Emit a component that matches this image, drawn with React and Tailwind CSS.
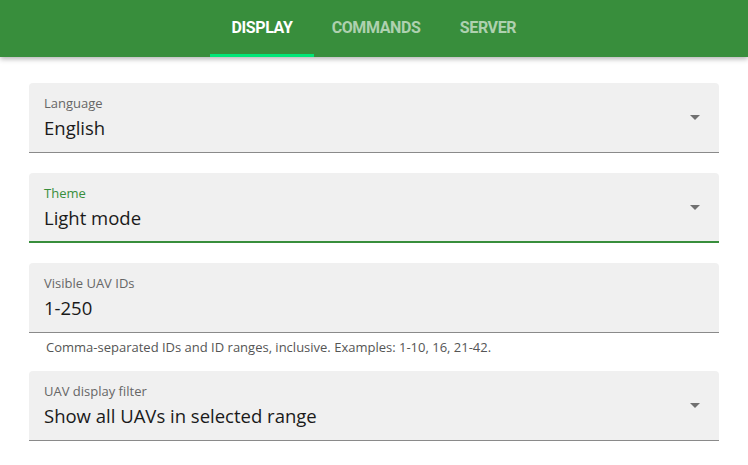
import React from "react";

function Arrow() {
  return (
    <svg width="10" height="5" viewBox="0 0 10 5" className="absolute right-[19px] top-[32px]">
      <path d="M0 0L5 5L10 0Z" fill="#707070" />
    </svg>
  );
}

function Field({ label, value, select, focused }) {
  return (
    <div
      className={`relative h-[70px] rounded-t-[4px] bg-[#f0f0f0] px-[15px] pt-[12px] ${
        focused ? "border-b-2 border-[#388e3c]" : "border-b border-[#8a8a8a]"
      }`}
    >
      <div className={`text-[13px] leading-[16px] ${focused ? "text-[#388e3c]" : "text-[#666]"}`}>{label}</div>
      <div className="mt-[5px] text-[18.5px] leading-[24px] text-[#1a1a1a]">{value}</div>
      {select && <Arrow />}
    </div>
  );
}

export default function App() {
  return (
    <div className="h-[465px] w-[748px] bg-white" style={{ fontFamily: "'Open Sans', Roboto, sans-serif" }}>
      <div
        className="relative flex h-[57px] justify-center bg-[#388e3c] shadow-[0_2px_5px_rgba(0,0,0,0.3)]"
        style={{ fontFamily: "Roboto, sans-serif" }}
      >
        <div className="flex">
          <div className="relative flex w-[104px] items-center justify-center pb-[2px] text-[16px] font-bold tracking-tight text-white">
            DISPLAY
            <div className="absolute bottom-0 left-0 h-[3px] w-full bg-[#00e676]" />
          </div>
          <div className="flex w-[124px] items-center justify-center pb-[2px] text-[16px] font-bold tracking-tight text-white/60">
            COMMANDS
          </div>
          <div className="flex w-[100px] items-center justify-center pb-[2px] text-[16px] font-bold tracking-tight text-white/60">
            SERVER
          </div>
        </div>
      </div>
      <div className="flex flex-col px-[29px] pt-[26px] w-[748px]">
        <Field label="Language" value="English" select />
        <div className="h-[20px]" />
        <Field label="Theme" value="Light mode" select focused />
        <div className="h-[20px]" />
        <Field label="Visible UAV IDs" value="1-250" />
        <div className="px-[17px] pt-[6px] text-[13px] leading-[17px] text-[#555]">
          Comma-separated IDs and ID ranges, inclusive. Examples: 1-10, 16, 21-42.
        </div>
        <div className="h-[15px]" />
        <Field label="UAV display filter" value="Show all UAVs in selected range" select />
      </div>
    </div>
  );
}
